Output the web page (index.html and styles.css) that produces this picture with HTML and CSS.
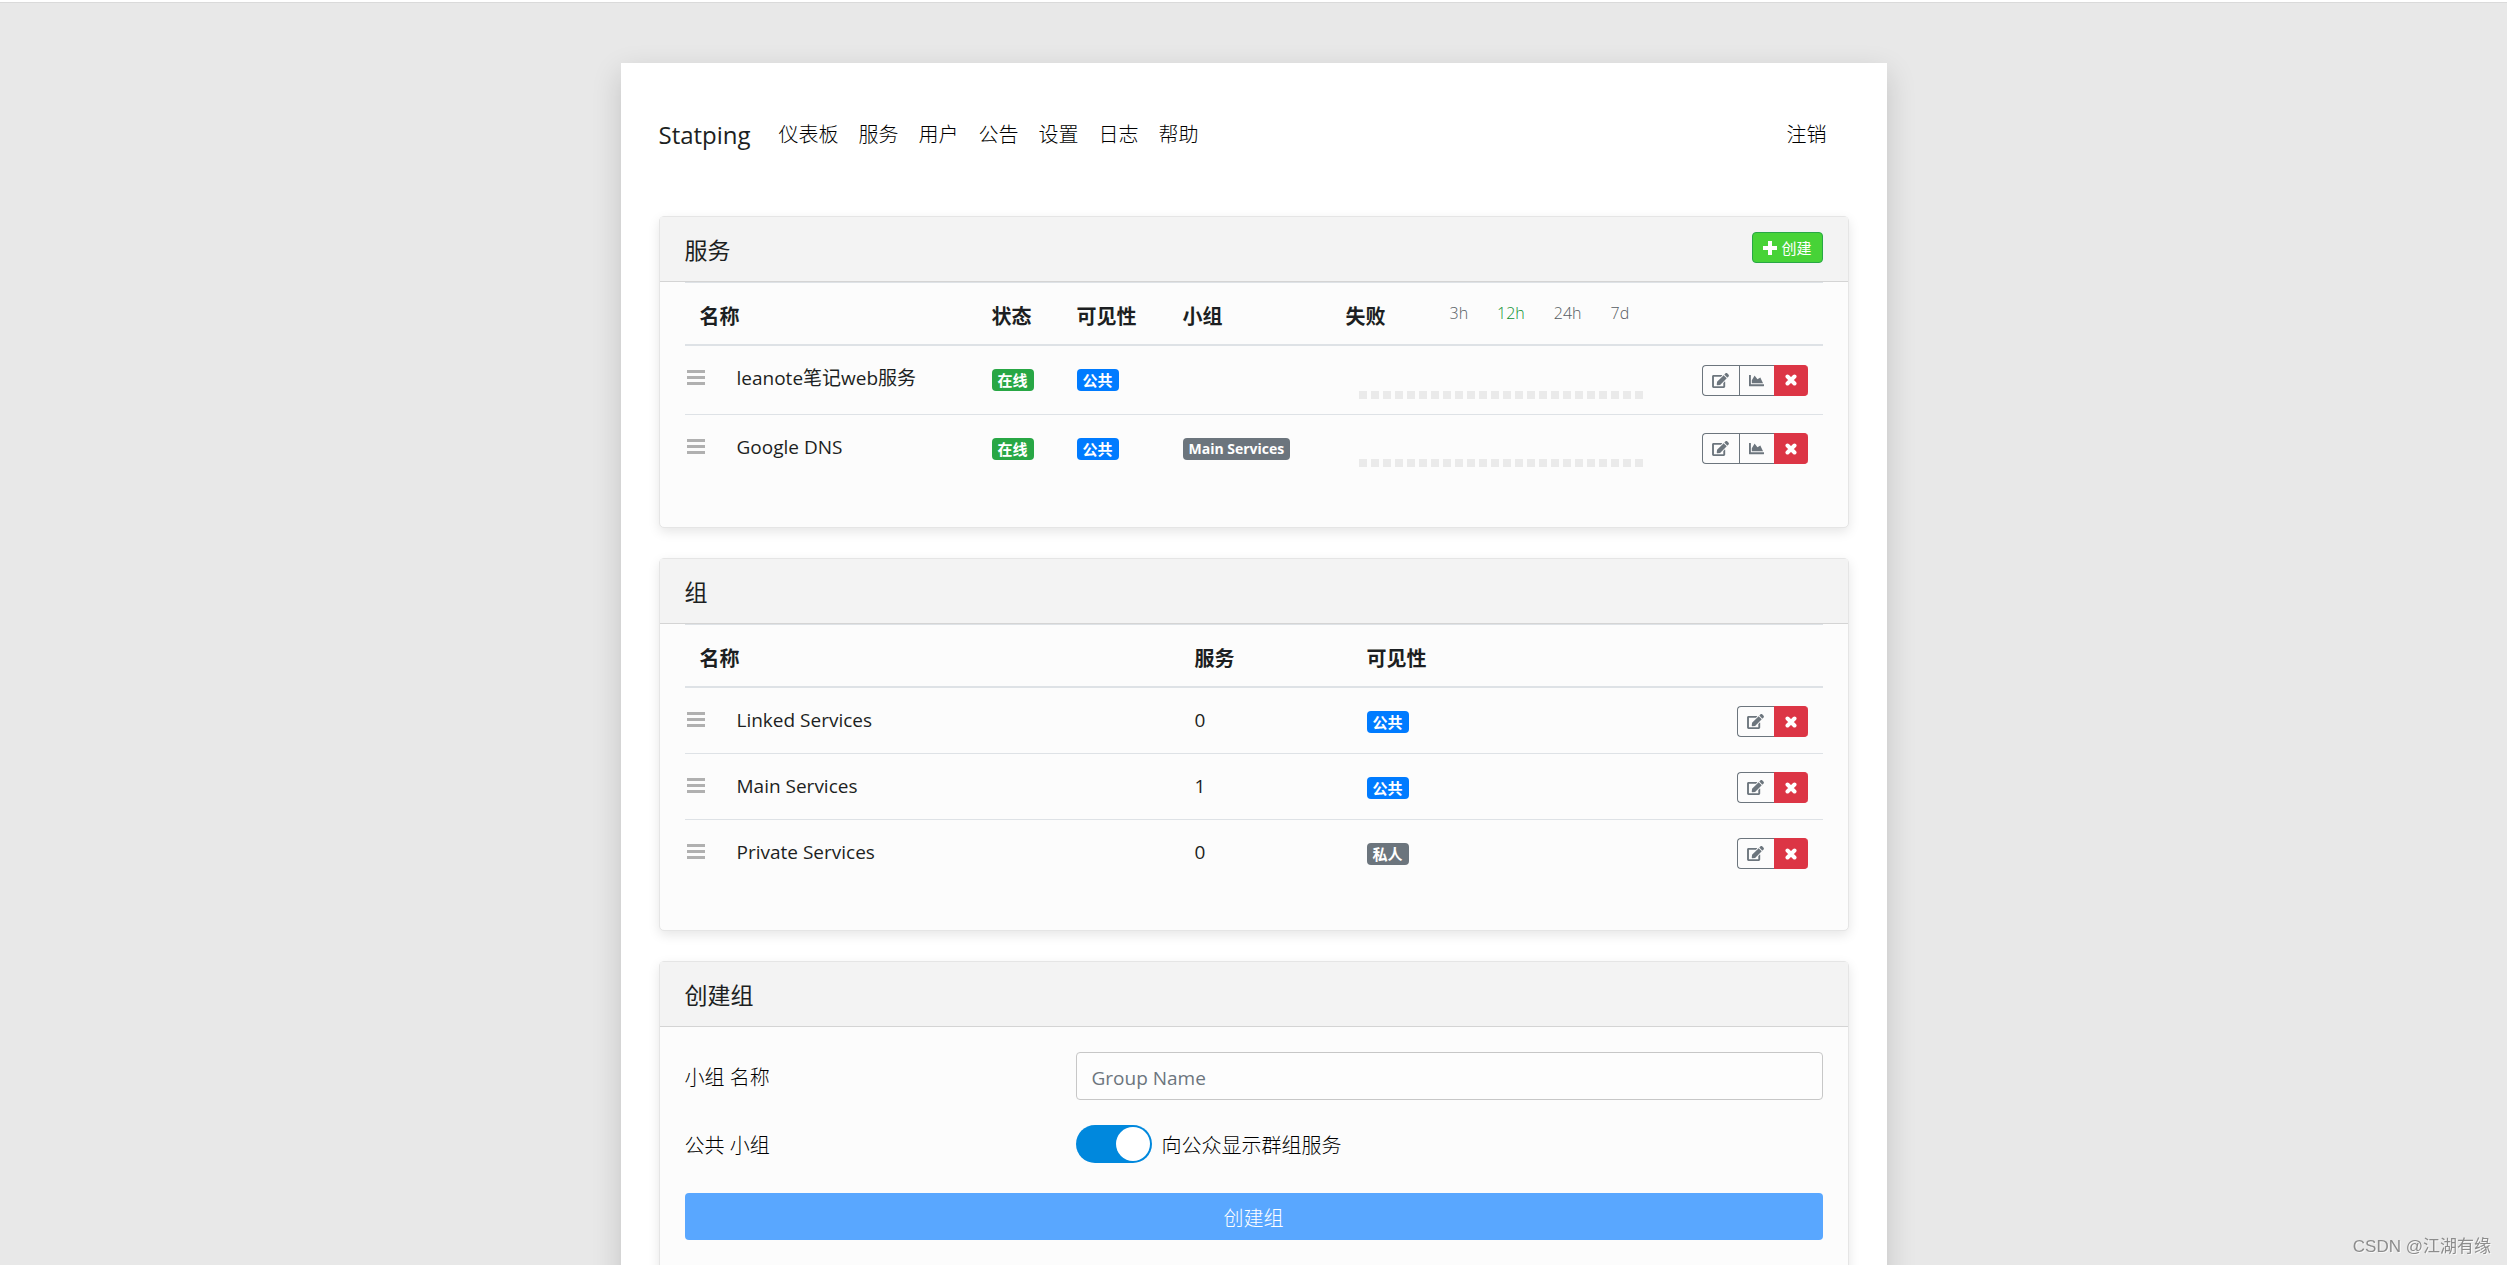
FILE: index.html
```html
<!DOCTYPE html>
<html lang="zh-CN">
<head>
<meta charset="utf-8">
<meta name="viewport" content="width=device-width, initial-scale=1">
<title>Statping</title>
<link rel="stylesheet" href="styles.css">
</head>
<body>
<svg class="sprite" aria-hidden="true">
  <symbol id="bars" viewBox="0 0 18 16"><path d="M0 0h18v3H0zM0 6h18v3H0zM0 12h18v3H0z"/></symbol>
  <symbol id="plus" viewBox="0 0 14 14"><path d="M5 0h4v5h5v4H9v5H5V9H0V5h5z"/></symbol>
  <symbol id="edit" viewBox="0 0 576 512"><path d="M402.600 83.200l90.200 90.200c3.800 3.800 3.800 10 0 13.800L274.400 405.600l-92.800 10.300c-12.400 1.400-22.900-9.100-21.500-21.500l10.300-92.800L388.800 83.200c3.800-3.800 10-3.800 13.800 0zm162-22.900l-48.800-48.800c-15.200-15.200-39.900-15.200-55.200 0l-35.400 35.400c-3.800 3.800-3.800 10 0 13.800l90.200 90.200c3.800 3.800 10 3.800 13.800 0l35.400-35.400c15.200-15.300 15.200-40 0-55.200zM384 346.200V448H64V128h229.800c3.200 0 6.200-1.300 8.500-3.500l40-40c7.600-7.600 2.200-20.500-8.500-20.500H48C21.500 64 0 85.500 0 112v352c0 26.500 21.500 48 48 48h352c26.500 0 48-21.500 48-48V306.200c0-10.700-12.900-16-20.500-8.500l-40 40c-2.200 2.300-3.500 5.300-3.500 8.500z"/></symbol>
  <symbol id="chart" viewBox="0 0 512 512"><path d="M500 384c6.600 0 12 5.400 12 12v40c0 6.600-5.400 12-12 12H12c-6.600 0-12-5.400-12-12V76c0-6.600 5.400-12 12-12h40c6.600 0 12 5.400 12 12v308h436zM372.700 159.500L288 216l-85.300-113.700c-5.100-6.800-15.500-6.300-19.900 1L96 248v104h384l-89.900-187.800c-3.200-6.500-11.400-8.700-17.400-4.700z"/></symbol>
  <symbol id="times" viewBox="0 0 12 12"><path d="M2.500 2.500l7 7M9.500 2.500l-7 7" fill="none" stroke="currentColor" stroke-width="4" stroke-linecap="round"/></symbol>
</svg>

<div class="container">
  <nav class="navbar">
    <a class="brand" href="#">Statping</a>
    <ul class="nav-list">
      <li><a href="#">仪表板</a></li>
      <li><a href="#">服务</a></li>
      <li><a href="#">用户</a></li>
      <li><a href="#">公告</a></li>
      <li><a href="#">设置</a></li>
      <li><a href="#">日志</a></li>
      <li><a href="#">帮助</a></li>
    </ul>
    <a class="logout" href="#">注销</a>
  </nav>

  <section class="card">
    <header class="card-header">
      <h1>服务</h1>
      <button class="create" type="button"><svg><use href="#plus"/></svg>创建</button>
    </header>
    <div class="card-body">
      <table class="services">
        <thead>
          <tr>
            <th class="c-name">名称</th>
            <th class="c-status">状态</th>
            <th class="c-visible">可见性</th>
            <th class="c-group">小组</th>
            <th class="c-fail">
              <div class="fail-head">失败
                <div class="ranges">
                  <button type="button">3h</button>
                  <button type="button" class="active">12h</button>
                  <button type="button">24h</button>
                  <button type="button">7d</button>
                </div>
              </div>
            </th>
            <th></th>
          </tr>
        </thead>
        <tbody>
          <tr>
            <td><div class="name"><svg><use href="#bars"/></svg>leanote笔记web服务</div></td>
            <td><span class="badge green">在线</span></td>
            <td><span class="badge blue">公共</span></td>
            <td></td>
            <td class="fail"><div class="ticks"><i></i><i></i><i></i><i></i><i></i><i></i><i></i><i></i><i></i><i></i><i></i><i></i><i></i><i></i><i></i><i></i><i></i><i></i><i></i><i></i><i></i><i></i><i></i><i></i></div></td>
            <td><div class="actions"><button type="button" aria-label="编辑"><svg class="i-edit"><use href="#edit"/></svg></button><button type="button" aria-label="图表" class="mid"><svg class="i-chart"><use href="#chart"/></svg></button><button type="button" aria-label="删除" class="danger"><svg class="i-times"><use href="#times"/></svg></button></div></td>
          </tr>
          <tr>
            <td><div class="name"><svg><use href="#bars"/></svg>Google DNS</div></td>
            <td><span class="badge green">在线</span></td>
            <td><span class="badge blue">公共</span></td>
            <td><span class="badge gray latin">Main Services</span></td>
            <td class="fail"><div class="ticks"><i></i><i></i><i></i><i></i><i></i><i></i><i></i><i></i><i></i><i></i><i></i><i></i><i></i><i></i><i></i><i></i><i></i><i></i><i></i><i></i><i></i><i></i><i></i><i></i></div></td>
            <td><div class="actions"><button type="button" aria-label="编辑"><svg class="i-edit"><use href="#edit"/></svg></button><button type="button" aria-label="图表" class="mid"><svg class="i-chart"><use href="#chart"/></svg></button><button type="button" aria-label="删除" class="danger"><svg class="i-times"><use href="#times"/></svg></button></div></td>
          </tr>
        </tbody>
      </table>
    </div>
  </section>

  <section class="card">
    <header class="card-header"><h1>组</h1></header>
    <div class="card-body">
      <table class="groups">
        <thead>
          <tr><th class="g-name">名称</th><th class="g-count">服务</th><th>可见性</th><th></th></tr>
        </thead>
        <tbody>
          <tr>
            <td><div class="name"><svg><use href="#bars"/></svg>Linked Services</div></td>
            <td>0</td>
            <td><span class="badge blue">公共</span></td>
            <td><div class="actions"><button type="button" aria-label="编辑"><svg class="i-edit"><use href="#edit"/></svg></button><button type="button" aria-label="删除" class="danger"><svg class="i-times"><use href="#times"/></svg></button></div></td>
          </tr>
          <tr>
            <td><div class="name"><svg><use href="#bars"/></svg>Main Services</div></td>
            <td>1</td>
            <td><span class="badge blue">公共</span></td>
            <td><div class="actions"><button type="button" aria-label="编辑"><svg class="i-edit"><use href="#edit"/></svg></button><button type="button" aria-label="删除" class="danger"><svg class="i-times"><use href="#times"/></svg></button></div></td>
          </tr>
          <tr>
            <td><div class="name"><svg><use href="#bars"/></svg>Private Services</div></td>
            <td>0</td>
            <td><span class="badge gray">私人</span></td>
            <td><div class="actions"><button type="button" aria-label="编辑"><svg class="i-edit"><use href="#edit"/></svg></button><button type="button" aria-label="删除" class="danger"><svg class="i-times"><use href="#times"/></svg></button></div></td>
          </tr>
        </tbody>
      </table>
    </div>
  </section>

  <section class="card">
    <header class="card-header"><h1>创建组</h1></header>
    <form class="form">
      <div class="form-row">
        <label for="title">小组 名称</label>
        <input id="title" class="text" type="text" placeholder="Group Name">
      </div>
      <div class="form-row">
        <span>公共 小组</span>
        <div class="switch">
          <input id="public" type="checkbox" checked>
          <label for="public">向公众显示群组服务</label>
        </div>
      </div>
      <button class="submit" type="button">创建组</button>
    </form>
  </section>
</div>
<div class="watermark">CSDN @江湖有缘</div>
</body>
</html>
```
FILE: styles.css
```css
* { box-sizing: border-box; }

body {
  margin: 0;
  padding-top: 61px;
  border-top: 2px solid #fff;
  background: #e8e8e8;
  box-shadow: inset 0 1px 0 #dadada;
  color: #1c1f22;
  font-family: "Open Sans", "Noto Sans CJK SC", sans-serif;
  font-size: 20px;
  line-height: 30px;
  overflow: hidden;
  height: 100vh;
}

a { color: inherit; text-decoration: none; }
button, input { font: inherit; }
svg { fill: currentColor; display: block; flex: none; }
.sprite { position: absolute; width: 0; height: 0; }

.container {
  max-width: 1266px;
  margin: 0 auto;
  padding: 38px 38px 60px;
  background: #fff;
  box-shadow: 0 10px 28px rgba(0, 0, 0, .16);
}

.navbar {
  display: flex;
  align-items: center;
  height: 68px;
  margin-bottom: 47px;
  padding-right: 22px;
  color: #000;
  font-weight: 300;
}
.brand { margin-right: 18px; color: #1c1f22; font-size: 24px; font-weight: 400; }
.nav-list { display: flex; margin: 0; padding: 0; list-style: none; }
.nav-list a { padding: 10px; }
.logout { margin-left: auto; }

.card {
  margin-bottom: 30px;
  background: #fcfcfc;
  border: 1px solid #e5e5e5;
  border-radius: 5px;
  box-shadow: 0 4px 12px rgba(0, 0, 0, .1);
}
.card-header {
  display: flex;
  align-items: center;
  justify-content: space-between;
  height: 65px;
  padding: 0 25px 3px 25px;
  background: #f3f3f3;
  border-bottom: 1px solid #d4d4d4;
}
.card-header h1 { margin: 0; padding-top: 4px; font-size: 23px; font-weight: 400; }
.create {
  display: flex;
  align-items: center;
  gap: 4px;
  height: 31px;
  padding: 0 10px;
  color: #fff;
  background: #47d337;
  border: 1px solid #28a745;
  border-radius: 4px;
  font-size: 15px;
}
.create svg { width: 14px; height: 14px; }

.card-body { padding: 0 25px 45px; }
table { width: 100%; border-collapse: separate; border-spacing: 0; table-layout: fixed; }
th {
  height: 64px;
  padding: 6px 15px 0;
  border-top: 1px solid #dee2e6;
  border-bottom: 2px solid #dee2e6;
  text-align: left;
  font-weight: 700;
}
td { padding: 0 15px 2px; height: 66px; border-top: 1px solid #dee2e6; font-size: 19px; }
tbody tr:first-child td { height: 65px; border-top: 0; }
.services tbody td { height: 68px; padding-bottom: 4px; }
.services tbody tr:first-child td { height: 68px; }
.c-name { width: 292px; }
.c-status { width: 85px; }
.c-visible { width: 106px; }
.c-group { width: 163px; }
.c-fail { width: 330px; }
.g-name { width: 495px; }
.g-count { width: 172px; }

.name { display: flex; align-items: center; gap: 32px; margin-left: -13px; white-space: nowrap; }
.name svg { width: 18px; height: 16px; color: #b0b0b0; }

.badge {
  display: block;
  width: fit-content;
  margin-top: 4px;
  padding: 0 6px;
  border-radius: 4px;
  color: #fff;
  font-size: 15px;
  font-weight: 700;
  line-height: 22px;
  white-space: nowrap;
}
.latin { font-size: 14px; }
.green { background: #28a745; }
.blue { background: #007bff; }
.gray { background: #6c757d; }

.fail-head { display: flex; align-items: center; }
.ranges { display: flex; gap: 29px; margin: 0 0 8px 64px; }
.ranges button {
  padding: 0;
  border: 0;
  background: none;
  color: #555b61;
  font-size: 16px;
  font-weight: 300;
  line-height: 22px;
}
.ranges .active { color: #0f9030; }
.services tbody .fail { vertical-align: bottom; padding-bottom: 15px; }
.ticks { display: flex; gap: 4px; padding-left: 13px; }
.ticks i { width: 8px; height: 8px; background: #eaeaea; }

.actions { display: flex; justify-content: flex-end; margin-top: 4px; }
.actions button {
  display: flex;
  align-items: center;
  justify-content: center;
  width: 37px;
  height: 31px;
  padding: 0;
  background: none;
  border: 1px solid #6c757d;
  border-right: 0;
  border-radius: 4px 0 0 4px;
  color: #6c757d;
}
.actions .mid { width: 35px; border-radius: 0; }
.actions .danger { width: 34px; background: #dc3545; border-color: #dc3545; border-radius: 0 4px 4px 0; color: #fff; }
.i-edit { width: 17px; height: 15px; }
.i-chart { width: 15px; height: 15px; }
.i-times { width: 12px; height: 12px; }

.form { padding: 25px 25px 45px; color: #000; font-weight: 300; }
.form-row { display: grid; grid-template-columns: 391px 1fr; align-items: center; min-height: 48px; margin-bottom: 20px; }
.form-row label, .form-row span { padding-top: 4px; }
.text {
  width: 100%;
  height: 48px;
  padding: 4px 15px 0;
  background: #fdfdfd;
  border: 1px solid #c7c7c7;
  border-radius: 4px;
  color: #495057;
  font-size: 19px;
  font-weight: 400;
}
.text::placeholder { color: #6c757d; opacity: 1; }
.switch { display: flex; align-items: center; gap: 10px; }
.switch input {
  appearance: none;
  width: 76px;
  height: 38px;
  margin: 0;
  padding: 2px;
  background: #08d;
  border-radius: 19px;
}
.switch input::before { content: ""; display: block; width: 34px; height: 34px; margin-left: auto; background: #fff; border-radius: 50%; }
.submit {
  display: block;
  width: 100%;
  height: 47px;
  margin-top: 25px;
  padding: 4px 0 0;
  background: #59a7ff;
  border: 0;
  border-radius: 4px;
  color: #fff;
}

.watermark {
  position: fixed;
  right: 16px;
  bottom: 6px;
  color: #8c8c8c;
  font-family: "Liberation Sans", "Noto Sans CJK SC", sans-serif;
  font-size: 17px;
  line-height: 24px;
  text-shadow: 1px 1px 0 #f8f8f8;
}
```
